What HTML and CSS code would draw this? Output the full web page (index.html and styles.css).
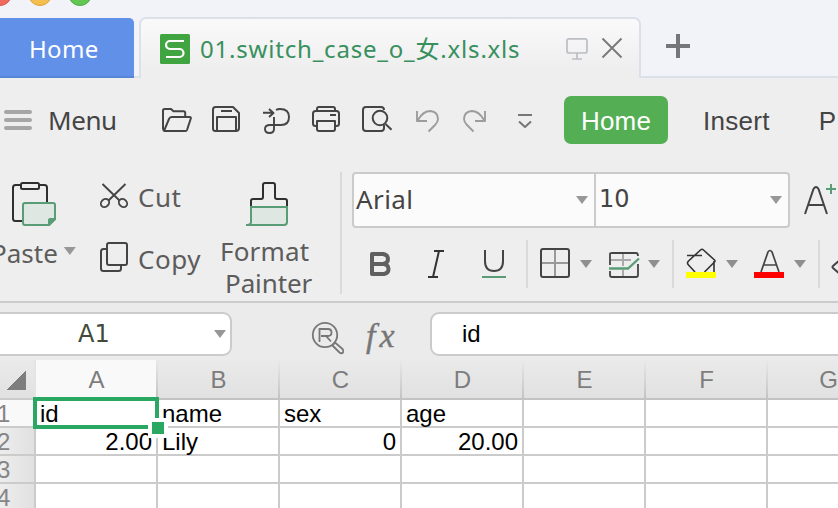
FILE: index.html
```html
<!DOCTYPE html>
<html lang="en">
<head>
<meta charset="utf-8">
<title>Spreadsheet</title>
<link rel="stylesheet" href="styles.css">
</head>
<body>
<div class="window">
  <header class="titlebar">
    <svg class="lights" viewBox="0 0 100 10" width="100" height="10"><circle cx="0" cy="-6" r="11.500" fill="#ee6a5f" stroke="#dc5b51"/><circle cx="40" cy="-6" r="11.500" fill="#f5bf4f" stroke="#dca43e"/><circle cx="80" cy="-6" r="11.500" fill="#62c655" stroke="#50ad43"/></svg>
    <div class="tab-home"><span>Home</span></div>
    <div class="tab-doc">
      <svg viewBox="160 34 30 30" width="30" height="30"><rect x="160" y="34" width="30" height="30" rx="1.500" fill="#40a540"/><path d="M184 41h-14a3.700 3.700 0 0 0 0 8h9.500a4 4 0 0 1 0 8H166" fill="none" stroke="#fff" stroke-width="2.200"/></svg>
      <span class="doc-name">01.switch_case_o_女.xls.xls</span>
      <svg class="tab-tools" viewBox="562 34 64 30" width="64" height="30" fill="none"><g stroke="#bbbec3" stroke-width="1.700"><rect x="567" y="38.800" width="20" height="14.200" rx="2"/><path d="M577 53v6M572 59h10"/></g><path d="M602.500 38.500l19 19M621.500 38.500l-19 19" stroke="#777" stroke-width="1.800"/></svg>
    </div>
    <svg class="plus" viewBox="664 32 28 28" width="28" height="28"><path d="M678 34v24M666 46h24" stroke="#75767a" stroke-width="4"/></svg>
  </header>

  <nav class="menu-row">
    <svg viewBox="0 98 48 44" width="48" height="44"><path d="M6 112h24M6 120h24M6 128h24" stroke="#a6a6a6" stroke-width="4" stroke-linecap="round"/></svg>
    <span class="menu-label">Menu</span>
    <svg class="quick" viewBox="156 98 394 44" width="394" height="44" fill="none" stroke="#444" stroke-width="2" stroke-linejoin="round">
      <path d="M164 130.500q-1-.4-1-2v-18q0-1.500 1.500-1.500h6.500l2.500 2.300h10q1.700 0 1.700 1.700v4M164 130.800l5-11.800q.8-2 2.500-2h18q1.800 0 1.300 1.500l-3.800 11.500q-.4 1-1.500 1h-21z"/>
      <path d="M215.500 107h17.500l6 6v15q0 3-3 3h-20.500q-2.500 0-2.500-2.500v-19q0-2.500 2.500-2.500zM217 131v-14h19v14M221 111h11"/>
      <path d="M263 112.800h10M269 109l4.500 4-4.500 4M276 110q1.500-1 4-1 9 0 9 8t-8 8h-11q-5 0-5 4t4.500 4 4.500-4v-12" stroke-width="1.900"/>
      <path d="M317 111v-2q0-2 2-2h14q2 0 2 2v2M315.500 111h21q2.500 0 2.500 2.500v10q0 2.500-2.500 2.500H335v-5h-18v5h-1.500q-2.500 0-2.500-2.500v-10q0-2.500 2.500-2.500zM317 121h18v8q0 2-2 2h-14q-2 0-2-2zM330 115h6"/>
      <path d="M384 110q0-3-3-3h-15q-3 0-3 3v18q0 3 3 3h15q3 0 3-3v-3.500M385.500 124l6 5.700"/><circle cx="380" cy="118" r="7.300"/>
      <g stroke="#9c9c9c" stroke-width="1.900"><path d="M417 111v10h10M418 120q5-9 12.500-9 7.500 1 7.500 8 0 3-3 6l-6.500 6.500"/><path d="M485 111v10h-10M484 120q-5-9-12.500-9-7.500 1-7.500 8 0 3 3 6l6.500 6.500"/></g>
      <path d="M518 115h14M519 121.500l6 5.500 6-5.500" stroke="#777" stroke-width="2"/>
    </svg>
    <span class="ribbon-active">Home</span>
    <span class="ribbon-tab">Insert</span>
    <span class="ribbon-tab page-tab">P</span>
  </nav>

  <section class="ribbon">
    <div class="paste">
      <svg viewBox="0 178 60 50" width="60" height="50" fill="none" stroke="#2f2f2f" stroke-width="2"><path d="M20 185h-4.500q-2.500 0-2.500 2.500v31q0 2.500 2.500 2.500h6.500M40 185h4.500q2.500 0 2.500 2.500V202"/><rect x="21" y="183" width="18" height="6" rx="1.500"/><path d="M25 203h28q2 0 2 2v14l-6 6H25q-2 0-2-2v-18q0-2 2-2z" fill="#dfe7e2" stroke="#599c76"/><path d="M56 218h-6q-2 0-2 2v6h1.500l6.500-6.500z" fill="#599c76" stroke="none"/></svg>
      <div class="paste-label"><span>Paste</span><i class="arrow"></i></div>
    </div>
    <div class="clip">
      <div class="cut"><svg viewBox="98 182 40 30" width="40" height="30" fill="none" stroke="#444" stroke-width="1.900"><path d="M102.500 184l17 16.500M125.500 184l-17 16.500"/><ellipse cx="105" cy="203" rx="4.500" ry="3.700" transform="rotate(-45 105 203)"/><ellipse cx="123" cy="203" rx="4.500" ry="3.700" transform="rotate(45 123 203)"/></svg><span>Cut</span></div>
      <div class="copy"><svg viewBox="98 240 40 34" width="40" height="34" fill="none" stroke="#444" stroke-width="2"><rect x="107" y="243" width="20" height="22" rx="2"/><path d="M107 249h-3.500q-2.500 0-2.500 2.500v17q0 2.500 2.500 2.500h15q2.500 0 2.500-2.500V265"/></svg><span>Copy</span></div>
    </div>
    <div class="painter">
      <svg viewBox="244 178 48 50" width="48" height="50" fill="none" stroke-width="2"><path d="M251 207h36v15q0 3-3 3h-33z" fill="#dfe7e2"/><path d="M251 206v-5q0-2 2-2h8q2 0 2-2v-12q0-2 2-2h8q2 0 2 2v12q0 2 2 2h8q2 0 2 2v5" stroke="#2f2f2f"/><path d="M251 223v-16h36v15q0 3-3 3h-38q5 0 5-3" stroke="#599c76"/></svg>
      <span class="pl1">Format</span><span class="pl2">Painter</span>
    </div>
    <div class="font-group">
      <div class="combos">
        <div class="family"><span>Arial</span><i class="arrow"></i></div>
        <div class="size"><span>10</span><i class="arrow"></i></div>
        <svg viewBox="802 178 36 44" width="36" height="44" fill="none" stroke="#444" stroke-width="2"><path d="M805 214l8.500-25q2.500-4 5 0l8.500 25M808 205h16"/><path d="M826 189h10M831 184v10" stroke="#599c76"/></svg>
      </div>
      <svg class="format-icons" viewBox="342 240 496 50" width="496" height="50" fill="none" stroke="#444" stroke-width="2">
        <path d="M372 254h11q5 1 5 5t-5 5h-11 12q4.500 1 4.500 5t-4.500 5h-12z" stroke="#606060" stroke-width="4" stroke-linejoin="round"/>
        <path d="M434 251h10M428 277h10M439 251l-6 26" stroke="#333"/>
        <path d="M485 250v11q0 10 9 10t9-10v-11" stroke-width="2"/><path d="M482 277h24" stroke="#599c76"/>
        <path d="M527 240v48M673 240v48M819 240v48" stroke="#dadada"/>
        <path d="M555 250v26M542 263h26" stroke="#999"/><rect x="541" y="249" width="28" height="28" rx="2"/>
        <path d="M611 260h20M623 253v13M623 270v6" stroke="#aaa"/><path d="M610 265v-11q0-1 2-1h24q2 0 2 3M610 271v4q0 2 2 2h24q2 0 2-2v-11" stroke-width="1.800"/><path d="M609 268.500h19l11-10" stroke="#599c76" stroke-width="2.300"/>
        <path d="M695 272l-6.500-7q-2-2 0-4l12-11q1.500-1.500 3 0l11 10q1 1 0 2l-10 10M687 255.500h15M714 261v11" stroke="#333" stroke-width="1.600"/><path d="M686 275h30" stroke="#ff0" stroke-width="6"/>
        <path d="M761 272l7-20q2-3 4 0l7 20M764 265h12" stroke-width="1.700"/><path d="M754 275h30" stroke="#f00" stroke-width="6"/>
        <path d="M580 260h12l-6 8zM648 260h12l-6 8zM726 260h12l-6 8zM794 260h12l-6 8z" fill="#8f8f8f" stroke="none"/>
        <path d="M842 258l-9 8q-1 1 0 2l9 8"/>
      </svg>
    </div>
  </section>

  <section class="formula-bar">
    <div class="namebox"><span>A1</span><i class="arrow"></i></div>
    <svg viewBox="308 318 40 38" width="40" height="38" fill="none" stroke="#777" stroke-width="1.800"><circle cx="325" cy="335" r="12.200"/><path d="M319.500 342v-13h8.500q3.500 0 3.500 3.500t-3.500 3.500h-7M326 336l5 5.500"/><path d="M332.500 345.500l7 7q2 1.500 3.500 0 1-2-.5-3.500l-7.500-6.500z"/></svg>
    <span class="fx">fx</span>
    <div class="formula">id</div>
  </section>

  <main class="sheet">
    <div class="cell corner"></div><div class="cell col active">A</div><div class="cell col">B</div><div class="cell col">C</div><div class="cell col">D</div><div class="cell col">E</div><div class="cell col">F</div><div class="cell col">G</div>
    <div class="cell row active">1</div><div class="cell selected">id<i class="handle"></i></div><div class="cell">name</div><div class="cell">sex</div><div class="cell">age</div><div class="cell"></div><div class="cell"></div><div class="cell"></div>
    <div class="cell row">2</div><div class="cell num">2.00</div><div class="cell">Lily</div><div class="cell num">0</div><div class="cell num">20.00</div><div class="cell"></div><div class="cell"></div><div class="cell"></div>
    <div class="cell row">3</div><div class="cell"></div><div class="cell"></div><div class="cell"></div><div class="cell"></div><div class="cell"></div><div class="cell"></div><div class="cell"></div>
    <div class="cell row">4</div><div class="cell"></div><div class="cell"></div><div class="cell"></div><div class="cell"></div><div class="cell"></div><div class="cell"></div><div class="cell"></div>
  </main>
</div>
</body>
</html>
```
FILE: styles.css
```css
* { box-sizing: border-box; }
body { margin: 0; }
svg { display: block; flex: none; }
span { white-space: nowrap; flex: none; }
.window {
  width: 838px; height: 508px; overflow: hidden;
  display: flex; flex-direction: column;
  background: #eee; color: #444;
  font: 26px/32px "Noto Sans", "Noto Sans CJK SC", sans-serif;
}
.arrow {
  width: 12px; height: 8px; flex: none;
  background: #979797; clip-path: polygon(0 0, 100% 0, 50% 100%);
}

.titlebar {
  height: 78px; flex: none; display: flex; align-items: flex-end;
  background: linear-gradient(#dce1e9, #dce1e9) 0 76px / 100% 2px no-repeat, #f2f3f8;
}
.lights { position: absolute; top: 0; left: 0; }
.tab-home {
  width: 134px; height: 60px; padding: 15px 0 0 29px;
  background: #6190e8; border-bottom: 2px solid #5785d6;
  border-radius: 0 5px 0 0; color: #fff;
  font-size: 24px; letter-spacing: .3px;
}
.tab-doc {
  width: 502px; height: 61px; margin-left: 5px; padding-left: 19px;
  display: flex; align-items: flex-start;
  border: 2px solid #dce1e9; border-bottom: 0; border-radius: 7px 7px 0 0;
  background: linear-gradient(#fafafa, #eee 85%);
}
.tab-doc svg { margin-top: 15px; }
.doc-name {
  width: 332px; margin: 14px 0 0 10px; color: #38905e;
  font-size: 24px; letter-spacing: .8px;
}
.tab-tools { margin-left: 30px; }
.plus { margin: 0 0 18px 23px; }

.menu-row { height: 84px; flex: none; display: flex; align-items: center; }
.menu-label { width: 108px; letter-spacing: -.4px; }
.quick { margin-right: 14px; }
.ribbon-active, .ribbon-tab { font-family: "Liberation Sans", sans-serif; font-size: 26px; }
.ribbon-active {
  width: 104px; height: 48px; border-radius: 7px; background: #54ae54;
  color: #fff; line-height: 51px; text-align: center; letter-spacing: .2px;
}
.ribbon-tab { margin-left: 35px; padding-top: 2px; letter-spacing: .3px; }
.page-tab { margin-left: 49px; }

.ribbon { height: 139px; flex: none; display: flex; color: #5c5c5c; }
.paste { width: 98px; padding-top: 16px; }
.paste-label { display: flex; align-items: center; margin: 9px 0 0 -9px; }
.paste-label .arrow { margin: -4px 0 0 6px; }
.clip { width: 120px; padding-top: 19px; }
.cut, .copy { display: flex; align-items: center; letter-spacing: .5px; }
.copy { margin-top: 30px; }
.copy svg { margin-top: -4px; }
.painter { width: 122px; padding-top: 16px; display: flex; flex-direction: column; }
.painter svg { margin-left: 26px; }
.pl1 { margin: 7px 0 0 2px; letter-spacing: .2px; }
.pl2 { margin-left: 7px; letter-spacing: -.1px; }
.font-group {
  width: 498px; height: 122px; flex: none; margin-top: 10px;
  border-left: 2px solid #dadada; color: #444;
}
.combos { height: 56px; display: flex; align-items: center; padding-left: 10px; }
.family, .size {
  height: 56px; display: flex; align-items: center; justify-content: space-between;
  border: 2px solid #cbcbcb; background: #fbfbfb;
}
.family { width: 244px; padding: 0 6px 0 2px; border-radius: 4px 0 0 4px; }
.family span { margin-top: -2px; letter-spacing: .4px; }
.size { width: 194px; padding: 0 6px 0 3px; border-left: 0; border-radius: 0 4px 4px 0; }
.size span { margin-top: -3px; font: 24px/32px "DejaVu Sans", sans-serif; }
.combos > svg { margin-left: 12px; }
.format-icons { margin-top: 12px; }

.formula-bar {
  height: 59px; flex: none; display: flex; align-items: flex-start;
  border-top: 2px solid #cbcbcb; background: #ebebeb;
}
.namebox {
  width: 232px; height: 44px; flex: none; margin-top: 9px; padding: 0 4px 0 78px;
  display: flex; align-items: center; justify-content: space-between;
  border: 2px solid #cbcbcb; border-left: 0; border-radius: 0 9px 9px 0;
  background: #fff; color: #414b3b;
}
.namebox span { font: 24px/32px "DejaVu Sans", sans-serif; }
.formula-bar > svg { margin: 15px 0 0 76px; }
.fx {
  width: 65px; margin: 17px 0 0 18px; color: #777;
  font: italic 34px/32px "Liberation Serif", serif; letter-spacing: 4px;
  -webkit-text-stroke: .4px #777;
}
.formula {
  width: 420px; height: 44px; flex: none; margin: 9px 0 0 -1px; padding-left: 30px;
  border: 2px solid #cbcbcb; border-radius: 9px; background: #fff;
  color: #000; font: 24px/40px "Liberation Sans", sans-serif;
}

.sheet {
  display: grid; grid-template-columns: 36px repeat(7, 122px);
  grid-template-rows: 40px repeat(4, 28px);
  color: #000; font: 24px/28px "Liberation Sans", sans-serif;
}
.cell { padding-left: 4px; border-right: 2px solid #cbcbcb; border-bottom: 2px solid #cbcbcb; background: #fff; }
.num { padding: 0 4px 0 0; text-align: right; }
.col {
  padding: 0 0 0 1px; text-align: center; color: #7d7d7d; line-height: 40px;
  border-image: linear-gradient(#eaeaea, #c2c2c2) 1;
  border-width: 0 2px 2px 0; border-style: solid;
  background: linear-gradient(#eaeaea, #e1e1e1);
}
.col.active { background: #f9f9f9; }
.corner {
  border-right-color: #e4e4e4;
  background: linear-gradient(135deg, transparent 50%, #7d7d7d 50%) 7px 11px / 19px 19px no-repeat, linear-gradient(#eaeaea, #e1e1e1);
}
.row { padding: 0; text-indent: -3px; color: #858585; background: linear-gradient(90deg, #ededed, #e1e1e1); }
.row.active { background: #f9f9f9; }
.selected { position: relative; }
.selected::before {
  content: ""; position: absolute; inset: -3px -3px -3px -3px; border: 4px solid #2aa862;
}
.handle {
  position: absolute; right: -12px; bottom: -12px; z-index: 1; width: 20px; height: 20px;
  border: 4px solid #fff; background: #2aa862;
}
```
